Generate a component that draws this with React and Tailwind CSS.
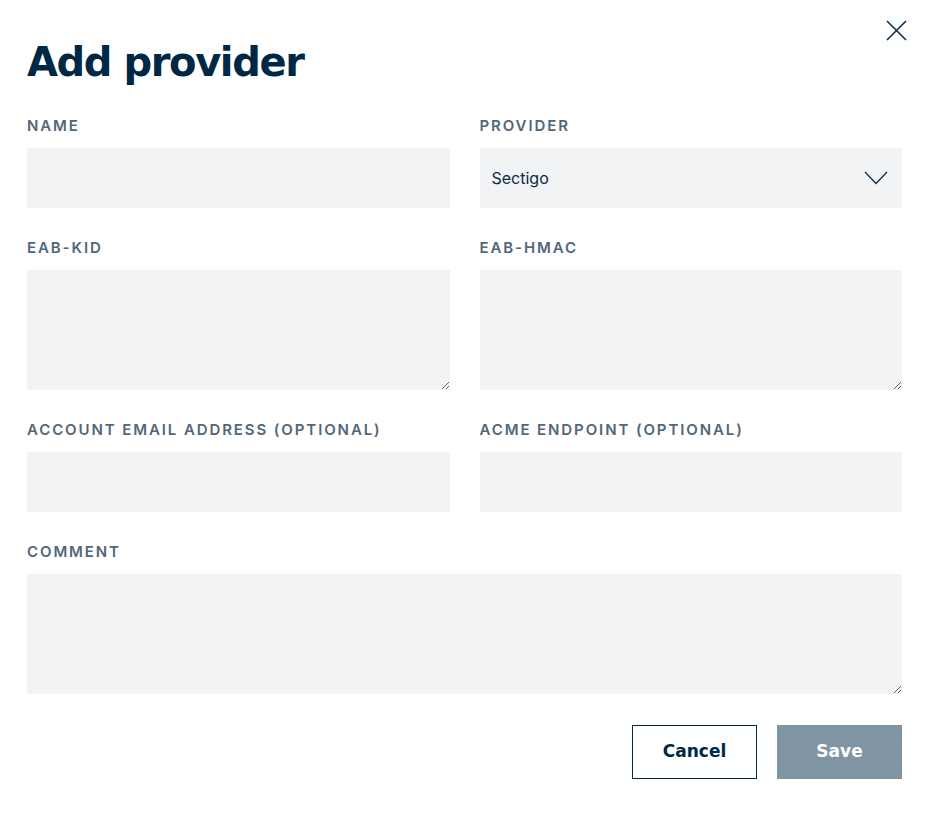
import React, { useState } from 'react';

const heading = { fontFamily: '"DejaVu Sans", "Liberation Sans", sans-serif' };
const body = { fontFamily: 'Inter, "Liberation Sans", sans-serif' };

const Label = ({ htmlFor, children }) => (
    <label
        htmlFor={htmlFor}
        className="block h-5 mb-3 text-[15px] font-semibold leading-5 tracking-[1.9px] text-[#52677a] uppercase"
    >
        {children}
    </label>
);

const inputCls = 'block w-full h-[60px] px-3 bg-[#f2f3f5] text-base text-[#0b2a45] outline-none';
const areaCls = 'block w-full h-[120px] px-3 py-3 bg-[#f2f3f5] text-base text-[#0b2a45] outline-none resize-y';

const App = () => {
    const [provider, setProvider] = useState('sectigo');

    return (
        <div className="min-h-screen bg-white pl-[27px] pr-[28px] pt-5" style={body}>
            {/* Header */}
            <div className="flex justify-between items-start">
                <h1 style={heading} className="mt-4 text-[40px] font-bold leading-[52px] text-[#002845] tracking-[-1.4px]">
                    Add provider
                </h1>
                <button className="-mt-px -mr-[6px] p-0 text-[#0d2d4a]" aria-label="Close">
                    <svg width="24" height="24" viewBox="0 0 24 24" fill="none" stroke="currentColor" strokeWidth="1.6">
                        <path d="M3 2 L22 21 M22 2 L3 21" />
                    </svg>
                </button>
            </div>

            <form className="mt-7" onSubmit={(e) => e.preventDefault()}>
                <div className="grid grid-cols-2 gap-[30px]">
                    <div>
                        <Label htmlFor="name">Name</Label>
                        <input id="name" type="text" className={inputCls} />
                    </div>
                    <div>
                        <Label htmlFor="provider">Provider</Label>
                        <div className="relative">
                            <select
                                id="provider"
                                value={provider}
                                onChange={(e) => setProvider(e.target.value)}
                                className={inputCls + ' appearance-none'}
                            >
                                <option value="sectigo">Sectigo</option>
                                <option value="zerossl">ZeroSSL</option>
                            </select>
                            <svg
                                className="absolute right-[14px] top-[23px] pointer-events-none text-[#0d2d4a]"
                                width="24" height="14" viewBox="0 0 24 14" fill="none" stroke="currentColor" strokeWidth="1.3"
                            >
                                <path d="M1 1 L12 12.5 L23 1" />
                            </svg>
                        </div>
                    </div>

                    <div>
                        <Label htmlFor="kid">EAB-KID</Label>
                        <textarea id="kid" className={areaCls} />
                    </div>
                    <div>
                        <Label htmlFor="hmac">EAB-HMAC</Label>
                        <textarea id="hmac" className={areaCls} />
                    </div>

                    <div>
                        <Label htmlFor="email">Account email address (optional)</Label>
                        <input id="email" type="email" className={inputCls} />
                    </div>
                    <div>
                        <Label htmlFor="endpoint">ACME endpoint (optional)</Label>
                        <input id="endpoint" type="text" className={inputCls} />
                    </div>

                    <div className="col-span-2">
                        <Label htmlFor="comment">Comment</Label>
                        <textarea id="comment" className={areaCls} />
                    </div>
                </div>

                {/* Actions */}
                <div className="flex justify-end gap-5 mt-[31px]">
                    <button
                        type="button"
                        style={heading}
                        className="w-[125px] h-[54px] border border-[#002845] bg-white text-[#002845] text-[17px] font-bold"
                    >
                        Cancel
                    </button>
                    <button
                        type="submit"
                        disabled
                        style={heading}
                        className="w-[125px] h-[54px] bg-[#8095a3] text-white text-[17px] font-bold"
                    >
                        Save
                    </button>
                </div>
            </form>
        </div>
    );
};

export default App;
